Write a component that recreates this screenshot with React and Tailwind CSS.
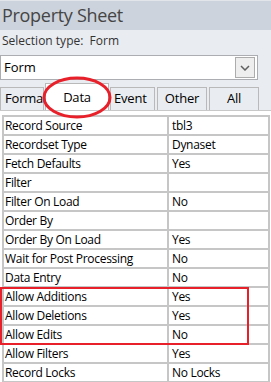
import React from "react";

const rows = [
  ["Record Source", "tbl3"],
  ["Recordset Type", "Dynaset"],
  ["Fetch Defaults", "Yes"],
  ["Filter", ""],
  ["Filter On Load", "No"],
  ["Order By", ""],
  ["Order By On Load", "Yes"],
  ["Wait for Post Processing", "No"],
  ["Data Entry", "No"],
  ["Allow Additions", "Yes"],
  ["Allow Deletions", "Yes"],
  ["Allow Edits", "No"],
  ["Allow Filters", "Yes"],
  ["Record Locks", "No Locks"],
];

export default function App() {
  return (
    <div
      className="relative w-[271px] h-[382px] overflow-hidden bg-[#e9ecf0] text-black"
      style={{ fontFamily: '"Open Sans", "Noto Sans", sans-serif' }}
    >
      <div className="h-[30px] bg-[#ccd3dc] border-t border-[#e2e6eb] pl-[2px] text-[18px] tracking-[-0.3px] leading-[28px] text-[#454545]">
        Property Sheet
      </div>
      <div className="h-[22px] pl-[2px] pt-[2px] text-[12px] leading-[18px] text-[#333]">
        Selection type:&nbsp; Form
      </div>
      <div className="mt-[3px] w-[258px] h-[25px] bg-white border border-[#abadb3] flex items-center justify-between pl-[3px] pr-[2px]">
        <span className="text-[13px]">Form</span>
        <div className="w-[20px] h-[21px] border border-[#acacac] bg-[#eeeeee] flex items-center justify-center">
          <svg width="10" height="6" viewBox="0 0 10 6">
            <path d="M1 1 L5 5 L9 1" stroke="#606060" strokeWidth="1.5" fill="none" />
          </svg>
        </div>
      </div>
      <div className="mt-[7px] h-[23px] flex items-end text-[13px] tracking-[-0.2px]">
        <div className="w-[44px] h-[23px] border border-b-0 border-[#b9b9b9] overflow-hidden pl-[4px] leading-[21px] whitespace-nowrap">
          Format
        </div>
        <div className="ml-[1px] w-[64px] h-[27px] bg-white border border-b-0 border-[#b9b9b9] flex justify-center pt-[3px] leading-[21px]">
          Data
        </div>
        <div className="ml-[1px] w-[45px] h-[23px] border border-b-0 border-[#b9b9b9] pl-[3px] leading-[21px]">
          Event
        </div>
        <div className="ml-[2px] w-[50px] h-[23px] border border-b-0 border-[#b9b9b9] flex justify-center leading-[21px]">
          Other
        </div>
        <div className="ml-[2px] w-[50px] h-[23px] border border-b-0 border-[#b9b9b9] flex justify-center leading-[21px]">
          All
        </div>
      </div>
      <div className="bg-white h-[272px] pt-[4px] pl-[2px] border-t border-[#c8c8c8]">
        <div className="w-[268px] bg-[#c6c6c6] p-[2px] grid grid-cols-[163px_1fr] gap-[2px] text-[12px] tracking-[-0.3px] leading-[17px]">
          {rows.map(([k, v]) => (
            <React.Fragment key={k}>
              <div className="h-[17px] bg-white pl-[1px] whitespace-nowrap">{k}</div>
              <div className="h-[17px] bg-white pl-[3px] whitespace-nowrap">{v}</div>
            </React.Fragment>
          ))}
        </div>
      </div>
      <svg
        className="absolute left-0 top-0 pointer-events-none"
        width="271"
        height="382"
      >
        <ellipse cx="77" cy="97.5" rx="33" ry="19.5" fill="none" stroke="#e8202a" strokeWidth="3" />
        <rect x="1" y="288" width="247" height="56" fill="none" stroke="#e8202a" strokeWidth="2" />
      </svg>
    </div>
  );
}
